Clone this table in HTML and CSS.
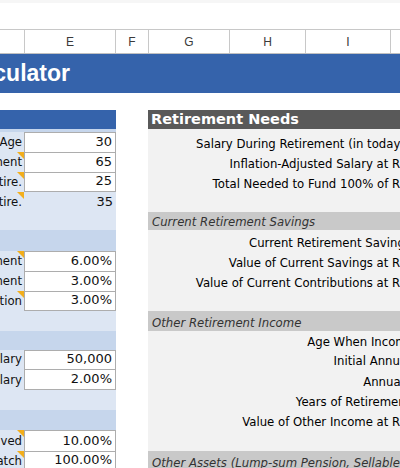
FILE: index.html
```html
<!DOCTYPE html>
<html>
<head>
<meta charset="utf-8">
<link rel="stylesheet" href="styles.css">
</head>
<body>
<div class="topstrip"></div>
<div class="formula"></div>
<div class="colhead">
  <div class="ch ch-d"></div>
  <div class="ch ch-e">E</div>
  <div class="ch ch-f">F</div>
  <div class="ch ch-g">G</div>
  <div class="ch ch-h">H</div>
  <div class="ch ch-i">I</div>
  <div class="ch ch-j">J</div>
</div>
<div class="titlebar"><span class="title">Retirement Calculator</span></div>
<div class="gap"></div>
<div class="sheet">
  <div class="panel rows panel-in">
    <div class="in-hdr span"></div>
    <div class="in-band span"></div>

    <div class="lbl"><span>Current Age</span></div><div class="val box">30</div>
    <div class="lbl note"><span>Age at Retirement</span></div><div class="val box">65</div>
    <div class="lbl note"><span>Years Until Retire.</span></div><div class="val box last">25</div>
    <div class="lbl note"><span>Years During Retire.</span></div><div class="val">35</div>
    <div class="blank span"></div>

    <div class="sec span"></div>
    <div class="lbl note"><span>Annual Return Before Retirement</span></div><div class="val box">6.00%</div>
    <div class="lbl"><span>Annual Return After Retirement</span></div><div class="val box">3.00%</div>
    <div class="lbl note"><span>Expected Inflation</span></div><div class="val box last">3.00%</div>
    <div class="blank span"></div>

    <div class="sec span"></div>
    <div class="lbl"><span>Current Annual Salary</span></div><div class="val box">50,000</div>
    <div class="lbl"><span>Annual Increase in Salary</span></div><div class="val box last">2.00%</div>
    <div class="blank span"></div>

    <div class="sec span"></div>
    <div class="lbl note"><span>Percent of Salary Saved</span></div><div class="val box">10.00%</div>
    <div class="lbl note"><span>Employer Match</span></div><div class="val box last">100.00%</div>
  </div>

  <div class="panel rows panel-out">
    <div class="out-hdr">Retirement Needs</div>
    <div class="out-row"></div>
    <div class="out-row"><span>Salary During Retirement (in today's dollars)</span></div>
    <div class="out-row"><span>Inflation-Adjusted Salary at Retirement</span></div>
    <div class="out-row"><span>Total Needed to Fund 100% of Retirement</span></div>
    <div class="out-row"></div>
    <div class="out-sub">Current Retirement Savings</div>
    <div class="out-row"><span>Current Retirement Savings (today)</span></div>
    <div class="out-row"><span>Value of Current Savings at Retirement</span></div>
    <div class="out-row"><span>Value of Current Contributions at Retirement</span></div>
    <div class="out-row"></div>
    <div class="out-sub">Other Retirement Income</div>
    <div class="out-row"><span>Age When Income Begins</span></div>
    <div class="out-row"><span>Initial Annual Income</span></div>
    <div class="out-row"><span>Annual Increase</span></div>
    <div class="out-row"><span>Years of Retirement Income</span></div>
    <div class="out-row"><span>Value of Other Income at Retirement</span></div>
    <div class="out-row"></div>
    <div class="out-sub">Other Assets (Lump-sum Pension, Sellable Assets)</div>
  </div>
</div>
</body>
</html>
```
FILE: styles.css
```css
* { box-sizing: border-box; }
html, body {
  margin: 0;
  padding: 0;
  width: 400px;
  height: 468px;
  overflow: hidden;
  background: #ffffff;
  font-family: "DejaVu Sans", sans-serif;
  color: #000;
}
.topstrip { height: 3px; background: #f6f6f6; }
.formula { height: 26px; background: #ffffff; }
.colhead {
  display: flex;
  height: 25px;
  border-top: 1px solid #c8c8c8;
  border-bottom: 1px solid #c0c0c0;
  width: 600px;
}
.ch {
  flex: none;
  border-right: 1px solid #c8c8c8;
  font-family: "Liberation Sans", Arial, sans-serif;
  font-size: 12px;
  color: #3a3a3a;
  display: flex;
  align-items: center;
  justify-content: center;
}
.ch-d { width: 25px; }
.ch-e { width: 91px; }
.ch-f { width: 33px; }
.ch-g { width: 81px; }
.ch-h { width: 76px; }
.ch-i { width: 85px; }
.ch-j { width: 80px; }
.titlebar {
  height: 39px;
  background: #3563ab;
  display: flex;
  align-items: flex-end;
  white-space: nowrap;
  overflow: hidden;
}
.title {
  font-family: "Liberation Sans", Arial, sans-serif;
  font-weight: bold;
  font-size: 23px;
  color: #ffffff;
  margin-left: -169px;
  padding-bottom: 6px;
  flex: none;
}
.gap { height: 17px; }
.sheet {
  display: flex;
  gap: 32px;
  align-items: flex-start;
}
.rows {
  display: grid;
  grid-template-rows: 19px 3px 20px 20px 20px 20px 18px 21px 20px 20px 20px 20px 19px 19px 21px 20px 20px 21px 20px;
}
.panel-in {
  flex: none;
  width: 116px;
  grid-template-columns: 24px 92px;
  background: #dde6f3;
}
.span { grid-column: 1 / 3; }
.in-hdr { background: #3563ab; }
.in-band { background: #c6d6ec; }
.sec { background: #c6d6ec; }
.lbl {
  position: relative;
  display: flex;
  justify-content: flex-end;
  align-items: flex-end;
  padding: 0 2px 3px 0;
  font-size: 11.7px;
  line-height: 14px;
  white-space: nowrap;
  color: #111;
}
.lbl span { flex: none; }
.note::after {
  content: "";
  position: absolute;
  top: 0;
  right: 0;
  width: 0;
  height: 0;
  border-top: 7px solid #f2ae1c;
  border-left: 7px solid transparent;
}
.val {
  display: flex;
  justify-content: flex-end;
  align-items: flex-end;
  padding: 0 3px 2px 0;
  font-size: 13px;
  line-height: 16px;
  color: #111;
}
.box {
  background: #ffffff;
  border: 1px solid #adadad;
  border-bottom: none;
}
.box.last { border-bottom: 1px solid #adadad; }
.panel-out {
  flex: none;
  width: 312px;
  background: #f2f2f2;
}
.out-hdr {
  background: #595959;
  color: #ffffff;
  font-weight: bold;
  font-size: 14.5px;
  line-height: 19px;
  padding-left: 3px;
  white-space: nowrap;
}
.out-row {
  display: flex;
  justify-content: flex-end;
  align-items: flex-end;
  padding: 0 3px 1px 0;
  font-size: 11.7px;
  line-height: 14px;
  white-space: nowrap;
  color: #000;
}
.out-row span { flex: none; }
.out-sub {
  background: #c9c9c9;
  font-style: italic;
  font-size: 11.7px;
  color: #333;
  padding-left: 4px;
  display: flex;
  align-items: flex-end;
  padding-bottom: 1px;
  white-space: nowrap;
}
```
